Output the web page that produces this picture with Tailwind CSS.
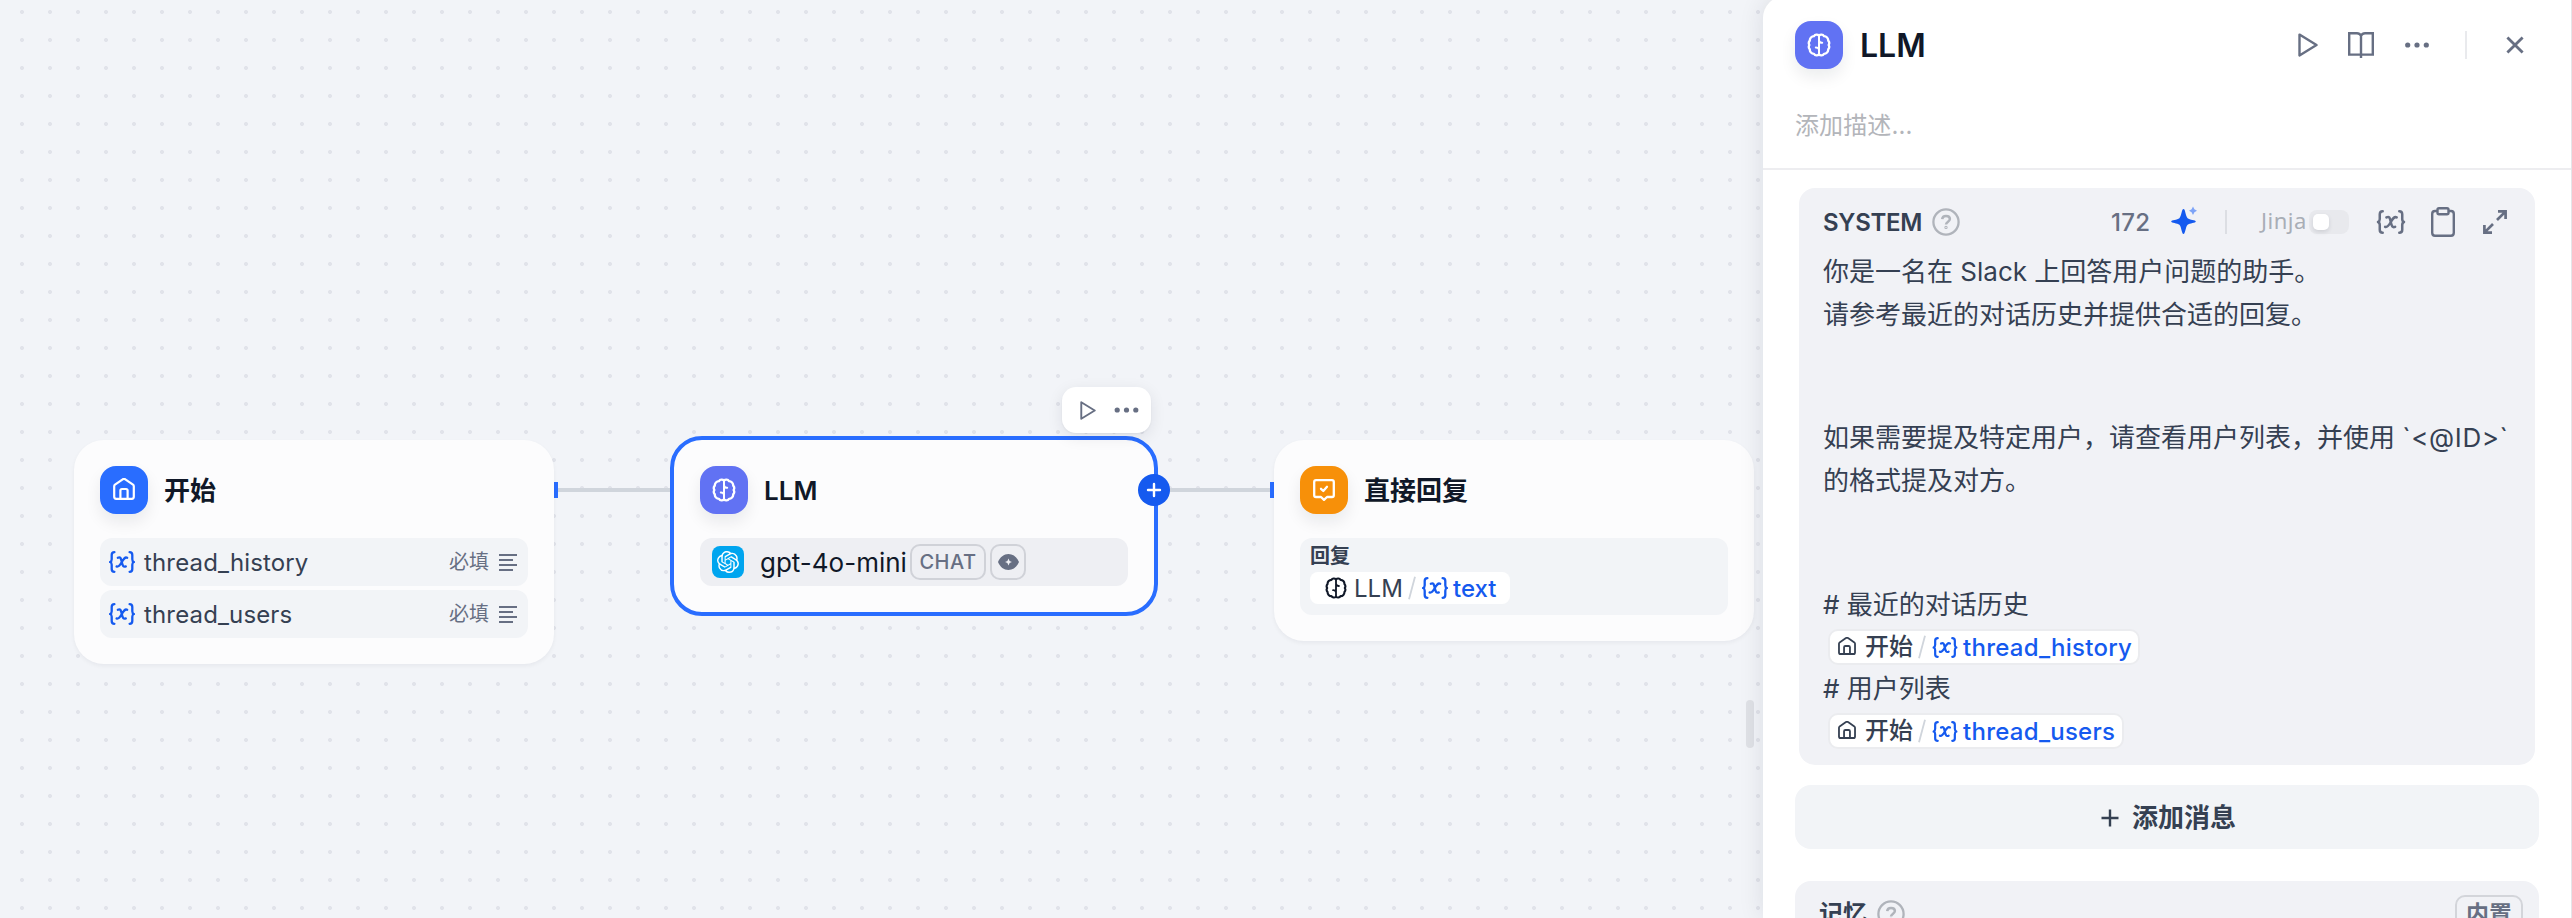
<!DOCTYPE html>
<html lang="zh-CN">
<head>
<meta charset="utf-8">
<title>Workflow</title>
<script src="https://cdn.jsdelivr.net/npm/@tailwindcss/browser@4"></script>
</head>
<body class="font-['Inter','Noto_Sans_CJK_SC',sans-serif] overflow-hidden">
<svg class="hidden">
  <symbol id="brain" viewBox="0 0 24 24"><g fill="none" stroke="currentColor" stroke-width="2.3" stroke-linejoin="round" stroke-linecap="round"><path d="M12 2.6A3.2 3.2 0 0 0 7 3.1A4.3 4.3 0 0 0 2.8 7.6A3.6 3.6 0 0 0 2.4 12A3.6 3.6 0 0 0 2.8 16.4A4.3 4.3 0 0 0 7 20.9A3.2 3.2 0 0 0 12 21.4A3.2 3.2 0 0 0 17 20.9A4.3 4.3 0 0 0 21.2 16.4A3.6 3.6 0 0 0 21.6 12A3.6 3.6 0 0 0 21.2 7.6A4.3 4.3 0 0 0 17 3.1A3.2 3.2 0 0 0 12 2.6Z"/><path d="M12 2.8V21.2M12 7.4C12.4 9 13.2 9.8 15.2 9.8M12 16.6C11.6 15 10.8 14.4 8.8 14.4" stroke-width="2"/></g></symbol>
  <symbol id="home" viewBox="0 0 22 22"><g fill="none" stroke="currentColor" stroke-width="2.2" stroke-linejoin="round"><path d="M1.2 8.2Q1.2 7.2 2 6.6L9.7 1.3Q11 .5 12.3 1.3L20 6.6Q20.8 7.2 20.8 8.2V18.8Q20.8 20.8 18.8 20.8H3.2Q1.2 20.8 1.2 18.8Z"/><path d="M7.4 20.5V12.6Q7.4 11 9 11H13Q14.6 11 14.6 12.6V20.5"/></g></symbol>
  <symbol id="var" viewBox="0 0 26 22"><g fill="none" stroke="currentColor" stroke-width="2.3" stroke-linecap="round" stroke-linejoin="round"><path d="M5.4 1.2C3.4 1.2 2.7 2.2 2.7 4V8.2C2.7 9.8 2.2 10.6 1.1 11C2.2 11.4 2.7 12.2 2.7 13.8V18C2.7 19.8 3.4 20.8 5.4 20.8M20.6 1.2C22.6 1.2 23.3 2.2 23.3 4V8.2C23.3 9.8 23.8 10.6 24.9 11C23.8 11.4 23.3 12.2 23.3 13.8V18C23.3 19.8 22.6 20.8 20.6 20.8"/><path d="M8.8 6.8C11.4 5.4 12 7.2 12.8 11C13.6 15 14.4 16.4 16.8 15.4M18.2 6.8C16 5.6 14.6 8 12.8 11C11 14.2 9.6 16.4 7.6 15.4"/></g></symbol>
  <symbol id="play" viewBox="0 0 20 24"><path d="M1.5 1.6L18.5 12L1.5 22.4Z" fill="none" stroke="currentColor" stroke-width="2.4" stroke-linejoin="round"/></symbol>
  <symbol id="dots" viewBox="0 0 24 6"><g fill="currentColor"><circle cx="2.7" cy="3" r="2.6"/><circle cx="12" cy="3" r="2.6"/><circle cx="21.3" cy="3" r="2.6"/></g></symbol>
  <symbol id="help" viewBox="0 0 28 28"><g fill="none" stroke="currentColor" stroke-width="2.3"><circle cx="14" cy="14" r="12.6"/><path d="M10.2 11.2C10.4 9 12 7.9 14 7.9C16.2 7.9 17.9 9.2 17.9 11.1C17.9 13.6 14 13.8 14 16.6" stroke-width="2.5"/><circle cx="14" cy="19.4" r=".5"/></g></symbol>
  <symbol id="openai" viewBox="0 0 24 24"><path fill="currentColor" d="M22.2819 9.8211a5.9847 5.9847 0 0 0-.5157-4.9108 6.0462 6.0462 0 0 0-6.5098-2.9A6.0651 6.0651 0 0 0 4.9807 4.1818a5.9847 5.9847 0 0 0-3.9977 2.9 6.0462 6.0462 0 0 0 .7427 7.0966 5.98 5.98 0 0 0 .511 4.9107 6.051 6.051 0 0 0 6.5146 2.9001A5.9847 5.9847 0 0 0 13.2599 24a6.0557 6.0557 0 0 0 5.7718-4.2058 5.9894 5.9894 0 0 0 3.9977-2.9001 6.0557 6.0557 0 0 0-.7475-7.0729zm-9.022 12.6081a4.4755 4.4755 0 0 1-2.8764-1.0408l.1419-.0804 4.7783-2.7582a.7948.7948 0 0 0 .3927-.6813v-6.7369l2.02 1.1686a.071.071 0 0 1 .038.052v5.5826a4.504 4.504 0 0 1-4.4945 4.4944zm-9.6607-4.1254a4.4708 4.4708 0 0 1-.5346-3.0137l.142.0852 4.783 2.7582a.7712.7712 0 0 0 .7806 0l5.8428-3.3685v2.3324a.0804.0804 0 0 1-.0332.0615L9.74 19.9502a4.4992 4.4992 0 0 1-6.1408-1.6464zM2.3408 7.8956a4.485 4.485 0 0 1 2.3655-1.9728V11.6a.7664.7664 0 0 0 .3879.6765l5.8144 3.3543-2.0201 1.1685a.0757.0757 0 0 1-.071 0l-4.8303-2.7865A4.504 4.504 0 0 1 2.3408 7.872zm16.5963 3.8558L13.1038 8.364 15.1192 7.2a.0757.0757 0 0 1 .071 0l4.8303 2.7913a4.4944 4.4944 0 0 1-.6765 8.1042v-5.6772a.79.79 0 0 0-.407-.667zm2.0107-3.0231l-.142-.0852-4.7735-2.7818a.7759.7759 0 0 0-.7854 0L9.409 9.2297V6.8974a.0662.0662 0 0 1 .0284-.0615l4.8303-2.7866a4.4992 4.4992 0 0 1 6.6802 4.66zM8.3065 12.863l-2.02-1.1638a.0804.0804 0 0 1-.038-.0567V6.0742a4.4992 4.4992 0 0 1 7.3757-3.4537l-.142.0805L8.704 5.459a.7948.7948 0 0 0-.3927.6813zm1.0976-2.3654l2.602-1.4998 2.6069 1.4998v2.9994l-2.5974 1.4997-2.6067-1.4997Z"/></symbol>
  <symbol id="slash" viewBox="0 0 8 24"><path d="M7 .8L1 23.2" stroke="#d0d5dc" stroke-width="1.8" fill="none"/></symbol>
</svg>

<div class="flex w-[2572px] h-[918px] bg-[#f2f4f7]">
  <!-- Canvas -->
  <main class="relative w-[1763px] h-[918px] shrink-0 bg-[#f2f4f8] bg-[radial-gradient(circle_at_22px_12px,#e1e3ea_1.7px,transparent_2.3px)] bg-[length:28px_28px]">
    <div class="absolute left-[554px] top-[488px] w-[116px] h-1 bg-[#d0d5dc]"></div>
    <div class="absolute left-[1158px] top-[488px] w-[112px] h-1 bg-[#d0d5dc]"></div>
    <div class="absolute left-[554px] top-[482px] w-1 h-4 bg-[#296dff]"></div>
    <div class="absolute left-[1270px] top-[482px] w-1 h-4 bg-[#296dff]"></div>

    <!-- Start node -->
    <section class="absolute left-[74px] top-[440px] w-[480px] h-[224px] rounded-[30px] bg-[#fcfcfd] shadow-[0_2px_4px_rgba(16,24,40,0.05)] px-[26px] pt-[26px]">
      <header class="flex items-center h-12">
        <div class="w-12 h-12 rounded-2xl bg-[#296dff] text-white flex items-center justify-center shadow-[0_8px_16px_rgba(16,24,40,0.08)]"><svg class="w-[22px] h-[22px] -mt-[2px]"><use href="#home"/></svg></div>
        <h2 class="ml-4 pt-px text-[26px] leading-8 font-semibold text-[#101828]">开始</h2>
      </header>
      <div class="mt-6 flex flex-col gap-1">
        <div class="h-12 rounded-xl bg-[#f2f4f7] flex items-center pl-[9px] pr-[11px]">
          <svg class="w-[26px] h-[22px] text-[#155aef]"><use href="#var"/></svg>
          <span class="ml-[9px] pt-[2px] text-[24px] leading-8 tracking-[.15px] text-[#354052]">thread_history</span>
          <span class="ml-auto text-[20px] leading-8 text-[#676f83]">必填</span>
          <div class="ml-[10px] w-[18px] flex flex-col gap-[3px] text-[#676f83]"><i class="h-[2px] w-[18px] bg-current"></i><i class="h-[2px] w-[14px] bg-current"></i><i class="h-[2px] w-[18px] bg-current"></i><i class="h-[2px] w-[14px] bg-current"></i></div>
        </div>
        <div class="h-12 rounded-xl bg-[#f2f4f7] flex items-center pl-[9px] pr-[11px]">
          <svg class="w-[26px] h-[22px] text-[#155aef]"><use href="#var"/></svg>
          <span class="ml-[9px] pt-[2px] text-[24px] leading-8 tracking-[.15px] text-[#354052]">thread_users</span>
          <span class="ml-auto text-[20px] leading-8 text-[#676f83]">必填</span>
          <div class="ml-[10px] w-[18px] flex flex-col gap-[3px] text-[#676f83]"><i class="h-[2px] w-[18px] bg-current"></i><i class="h-[2px] w-[14px] bg-current"></i><i class="h-[2px] w-[18px] bg-current"></i><i class="h-[2px] w-[14px] bg-current"></i></div>
        </div>
      </div>
    </section>

    <!-- LLM node -->
    <section class="absolute left-[670px] top-[436px] w-[488px] h-[180px] rounded-[32px] border-4 border-[#296dff] bg-[#fcfcfd] px-[26px] pt-[26px]">
      <header class="flex items-center h-12">
        <div class="w-12 h-12 rounded-2xl bg-[#6172f3] text-white flex items-center justify-center shadow-[0_8px_16px_rgba(16,24,40,0.08)]"><svg class="w-6 h-6"><use href="#brain"/></svg></div>
        <h2 class="ml-4 pt-px text-[26px] leading-8 font-semibold text-[#101828]">LLM</h2>
      </header>
      <div class="mt-6 h-12 rounded-xl bg-[#eeeff3] flex items-center pl-3">
        <div class="w-8 h-8 rounded-lg bg-[#00a5ef] text-white flex items-center justify-center"><svg class="w-[22px] h-[22px]"><use href="#openai"/></svg></div>
        <span class="ml-4 pt-[2px] w-[150px] text-[26px] leading-8 text-[#101828] whitespace-nowrap">gpt-4o-mini</span>
        <span class="w-[76px] h-9 rounded-[10px] border-2 border-[#d0d2d8] text-[#676f83] text-[20px] leading-8 font-medium text-center tracking-[.5px]">CHAT</span>
        <span class="ml-1 w-9 h-9 rounded-[10px] border-2 border-[#d0d2d8] flex items-center justify-center"><svg class="w-[21px] h-4" viewBox="0 0 21 16"><path fill="#676f83" fill-rule="evenodd" d="M10.5 0C15 0 19 3 21 8C19 13 15 16 10.5 16S2 13 0 8C2 3 6 0 10.5 0ZM10.5 4.6L9.4 6.9L7.1 8L9.4 9.1L10.5 11.4L11.6 9.1L13.9 8L11.6 6.9Z"/></svg></span>
      </div>
    </section>
    <div class="absolute left-[1062px] top-[387px] w-[89px] h-[46px] rounded-[14px] bg-white shadow-[0_4px_16px_rgba(16,24,40,0.09),0_1px_2px_rgba(16,24,40,0.05)] flex items-center pl-[18px] text-[#676f83]">
      <svg class="w-4 h-[19px]"><use href="#play"/></svg>
      <svg class="ml-[18px] w-[25px] h-[6px]"><use href="#dots"/></svg>
    </div>
    <div class="absolute left-[1138px] top-[474px] w-8 h-8 rounded-full bg-[#155aef] flex items-center justify-center"><svg class="w-4 h-4" viewBox="0 0 16 16"><path d="M8 2V14M2 8H14" stroke="#fff" stroke-width="2.4" stroke-linecap="round"/></svg></div>

    <!-- Answer node -->
    <section class="absolute left-[1274px] top-[440px] w-[480px] h-[201px] rounded-[30px] bg-[#fcfcfd] shadow-[0_2px_4px_rgba(16,24,40,0.05)] px-[26px] pt-[26px]">
      <header class="flex items-center h-12">
        <div class="w-12 h-12 rounded-2xl bg-[#f79009] text-white flex items-center justify-center shadow-[0_8px_16px_rgba(16,24,40,0.08)]"><svg class="w-[22px] h-[22px]" viewBox="0 0 22 22" fill="none" stroke="currentColor" stroke-width="2.3" stroke-linejoin="round" stroke-linecap="round"><path d="M3 1.2H19Q20.8 1.2 20.8 3V16.2Q20.8 18 19 18H14L11 20.8L8 18H3Q1.2 18 1.2 16.2V3Q1.2 1.2 3 1.2Z"/><path d="M8 9.8L10.3 12L14 7.8"/></svg></div>
        <h2 class="ml-4 pt-px text-[26px] leading-8 font-semibold text-[#101828]">直接回复</h2>
      </header>
      <div class="mt-6 h-[77px] rounded-xl bg-[#f2f4f7] pl-[10px] pt-1">
        <div class="h-[30px] text-[20px] leading-[28px] font-semibold text-[#354052]">回复</div>
        <div class="w-[200px] h-8 rounded-lg bg-white flex items-center pl-[15px]">
          <svg class="w-[22px] h-[22px] text-[#101828]"><use href="#brain"/></svg>
          <span class="ml-[7px] pt-px w-[51px] text-[24px] leading-8 text-[#354052]">LLM</span>
          <svg class="ml-[3px] w-2 h-6"><use href="#slash"/></svg>
          <svg class="ml-[6px] w-[26px] h-[22px] text-[#155aef]"><use href="#var"/></svg>
          <span class="ml-[5px] pt-px text-[24px] leading-8 font-medium text-[#155aef]">text</span>
        </div>
      </div>
    </section>
    <div class="absolute left-[1746px] top-[700px] w-2 h-12 rounded-full bg-[#dfe1e6]"></div>
  </main>

  <!-- Node settings panel -->
  <aside class="relative w-[809px] h-[922px] -mt-1 pt-1 shrink-0 rounded-tl-[22px] border-r border-[#e4e5e9] bg-white shadow-[-2px_0_24px_rgba(16,24,40,0.09)]">
    <header class="h-[90px] flex items-center pl-8 pr-[47px] text-[#676f83]">
      <div class="w-12 h-12 rounded-2xl bg-[#6172f3] text-white flex items-center justify-center shadow-[0_8px_16px_rgba(16,24,40,0.08)]"><svg class="w-6 h-6"><use href="#brain"/></svg></div>
      <h1 class="ml-[17px] pt-px text-[32px] leading-10 font-semibold text-[#101828]">LLM</h1>
      <svg class="ml-auto w-5 h-6"><use href="#play"/></svg>
      <svg class="ml-[29px] w-[28px] h-7" viewBox="0 0 28 28"><path d="M14 4.6C13 2.8 11.6 2.2 10 2.2H2.2V23.6H25.8V2.2H18C16.4 2.2 15 2.8 14 4.6V27" fill="none" stroke="currentColor" stroke-width="2.4"/></svg>
      <svg class="ml-[30px] w-6 h-[6px]"><use href="#dots"/></svg>
      <div class="ml-9 w-[2px] h-7 bg-[#e9eaed]"></div>
      <svg class="ml-[39px] w-[18px] h-[18px]" viewBox="0 0 18 18"><path d="M1.4 1.4L16.6 16.6M16.6 1.4L1.4 16.6" stroke="currentColor" stroke-width="2.8"/></svg>
    </header>
    <div class="h-[80px] pl-8 pt-4 border-b-2 border-[#ededf0] text-[24px] leading-10 tracking-[.1px] text-[#b3b5ba]">添加描述...</div>

    <section class="mt-[18px] ml-9 w-[736px] h-[577px] rounded-2xl bg-[#f1f2f6] pl-6 text-[#354052]">
      <header class="h-[62px] flex items-center pt-[6px] text-[#676f83]">
        <h3 class="w-[109px] pt-[2px] text-[24px] leading-8 font-semibold tracking-[-.3px] text-[#354052]">SYSTEM</h3>
        <svg class="w-7 h-7 text-[#b0b4bb]"><use href="#help"/></svg>
        <span class="ml-[151px] pt-[2px] w-[60px] text-[24px] leading-8 font-medium tracking-[.3px]">172</span>
        <svg class="w-[27px] h-[28px] -mt-1" viewBox="0 0 27 28"><path fill="#155aef" d="M12.5 3C14.4 3 14.4 9.8 16.6 12.2C18.6 14 24.8 13.9 24.8 15.5S18.6 17 16.6 18.8C14.4 21 14.4 28 12.5 28S10.6 21 8.4 18.8C6.4 17 .2 17.1.2 15.5S6.4 14 8.4 12.2C10.6 9.8 10.6 3 12.5 3Z"/><path fill="#7ea4f7" d="M22 .5L23.4 3.3L26 4.8L23.4 6.2L22 9L20.6 6.2L18 4.8L20.6 3.3Z"/></svg>
        <div class="ml-[27px] w-[2px] h-6 bg-[#dcdee3]"></div>
        <span class="ml-[34px] w-[48px] -mt-1 text-[22px] leading-8 tracking-[.5px] text-[#a9aeb6] font-['Noto_Sans']">Jinja</span>
        <div class="w-10 h-6 rounded-lg bg-[#e8e9ed] p-1"><div class="w-4 h-4 rounded-[5px] bg-white shadow-[0_2px_4px_rgba(16,24,40,0.12)]"></div></div>
        <svg class="ml-[27px] w-[30px] h-6"><use href="#var"/></svg>
        <svg class="ml-[25px] w-6 h-[30px]" viewBox="0 0 24 30" fill="none" stroke="currentColor" stroke-width="2.4" stroke-linejoin="round"><path d="M6.5 4H4Q1.2 4 1.2 7V25.8Q1.2 28.8 4 28.8H20Q22.8 28.8 22.8 25.8V7Q22.8 4 20 4H17.5"/><rect x="6.5" y="1.2" width="11" height="6" rx="1.5"/></svg>
        <svg class="ml-7 w-6 h-6" viewBox="0 0 24 24" fill="none" stroke="currentColor" stroke-width="2.7"><path d="M15 1.4H22.6V9M22.4 1.6L14 10M9 22.6H1.4V15M1.6 22.4L10 14"/></svg>
      </header>
      <div class="text-[26px] whitespace-nowrap">
        <p class="h-[43px] leading-[43px]">你是一名在 Slack 上回答用户问题的助手。</p>
        <p class="h-[43px] leading-[43px]">请参考最近的对话历史并提供合适的回复。</p>
        <p class="h-[80px]"></p>
        <p class="h-[43px] leading-[43px]">如果需要提及特定用户，请查看用户列表，并使用 <span class="tracking-[.6px]">`&lt;@ID&gt;`</span></p>
        <p class="h-[43px] leading-[43px]">的格式提及对方。</p>
        <p class="h-[81px]"></p>
        <p class="h-[43px] leading-[43px]"># 最近的对话历史</p>
        <div class="h-[42px] flex items-center pl-[5px]">
          <div class="w-[312px] h-9 rounded-[10px] border-2 border-[#ebecef] bg-white flex items-center pl-2">
            <svg class="w-[18px] h-[18px] -mt-[3px]"><use href="#home"/></svg>
            <span class="ml-[9px] w-[50px] text-[24px] leading-8 font-medium">开始</span>
            <svg class="ml-[3px] w-2 h-6"><use href="#slash"/></svg>
            <svg class="ml-[6px] w-[26px] h-[21px] text-[#155aef]"><use href="#var"/></svg>
            <span class="ml-[5px] pt-px text-[24px] leading-8 font-medium tracking-[.25px] text-[#155aef]">thread_history</span>
          </div>
        </div>
        <p class="h-[42px] leading-[42px]"># 用户列表</p>
        <div class="h-[42px] flex items-center pl-[5px]">
          <div class="w-[296px] h-9 rounded-[10px] border-2 border-[#ebecef] bg-white flex items-center pl-2">
            <svg class="w-[18px] h-[18px] -mt-[3px]"><use href="#home"/></svg>
            <span class="ml-[9px] w-[50px] text-[24px] leading-8 font-medium">开始</span>
            <svg class="ml-[3px] w-2 h-6"><use href="#slash"/></svg>
            <svg class="ml-[6px] w-[26px] h-[21px] text-[#155aef]"><use href="#var"/></svg>
            <span class="ml-[5px] pt-px text-[24px] leading-8 font-medium tracking-[.25px] text-[#155aef]">thread_users</span>
          </div>
        </div>
      </div>
    </section>

    <button class="mt-5 ml-8 w-[744px] h-16 rounded-2xl bg-[#f2f4f7] flex items-center justify-center gap-[13px] pl-[3px] pt-px text-[26px] leading-8 font-semibold text-[#354052]">
      <svg class="w-[18px] h-[18px]" viewBox="0 0 18 18"><path d="M9 .5V17.5M.5 9H17.5" stroke="currentColor" stroke-width="2.4"/></svg>添加消息
    </button>

    <section class="mt-8 ml-8 w-[744px] h-[37px] rounded-t-2xl bg-[#f1f2f6] overflow-hidden">
      <div class="h-[66px] flex items-center pl-6 pr-4">
        <h3 class="w-[58px] text-[24px] leading-8 font-semibold text-[#354052]">记忆</h3>
        <svg class="w-7 h-7 text-[#b0b4bb]"><use href="#help"/></svg>
        <span class="ml-auto w-[68px] h-[38px] rounded-[10px] border-2 border-[#d3d5da] text-center text-[23px] leading-[34px] font-semibold text-[#676f83]">内置</span>
      </div>
    </section>
  </aside>
</div>
</body>
</html>
